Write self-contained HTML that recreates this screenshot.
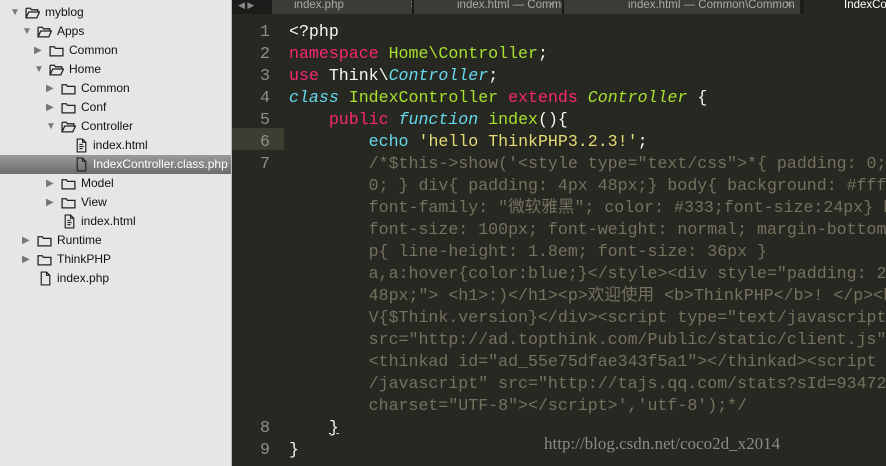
<!DOCTYPE html>
<html><head><meta charset="utf-8"><style>
*{margin:0;padding:0;box-sizing:border-box}
body{width:886px;height:466px;overflow:hidden;background:#272822;position:relative;font-family:"Liberation Sans",sans-serif}
#side{position:absolute;left:0;top:0;width:232px;height:466px;background:#e6e6e6;border-right:1px solid #bbb;overflow:hidden}
.r{position:absolute;height:19px;line-height:19px;font-size:12px;color:#111;white-space:nowrap}
.ar{position:absolute;top:0;font-size:10px;color:#777}
.r svg{position:absolute;top:3px}
.r .t{position:absolute;top:0;left:35px}
.sel{position:absolute;left:0;top:155px;width:232px;height:19px;background:linear-gradient(#9a9a9a,#6d6d6d)}
#tabs{position:absolute;left:232px;top:0;width:654px;height:14px;background:#1c1c1a;overflow:hidden}
.tab{position:absolute;top:0;height:14px;background:#3b3b37;color:#aaa;font-size:11.5px;line-height:11px;white-space:nowrap;overflow:hidden}
.tab i{position:absolute;font-style:normal;color:#999;top:0}
#cw{position:absolute;left:232px;top:14px;width:654px;height:452px;overflow:hidden}
#code{position:absolute;left:0;top:7px;font-family:"Liberation Mono","Noto Sans CJK SC",monospace;font-size:16.6px;line-height:22px;color:#f8f8f2}
.ln{position:absolute;left:0;width:38px;text-align:right;color:#8f908a}
.l{position:absolute;left:57px;white-space:pre}
.k{color:#f92672}.g{color:#a6e22e}.b{color:#66d9ef;font-style:italic}.y{color:#e6db74}.c{color:#75715e}.e{color:#66d9ef}
.gi{font-style:italic;color:#a6e22e}
.hl{position:absolute;left:232px;top:128px;width:52px;height:22px;background:#3e3d32}
</style></head><body>
<svg width="0" height="0" style="position:absolute"><defs>
<symbol id="fc" viewBox="0 0 14 12"><path d="M1 2.5h4l1 1.5h7v7H1z" fill="none" stroke="#222" stroke-width="1.2"/></symbol>
<symbol id="fo" viewBox="0 0 14 12"><path d="M1 2h4l1 1.5h6v2M1 2v9h10l2.5-5.5H3.5L1 11" fill="none" stroke="#222" stroke-width="1.2"/></symbol>
<symbol id="fi" viewBox="0 0 12 14"><path d="M2 1h5l3 3v9H2z M7 1v3h3" fill="none" stroke="#222" stroke-width="1.1"/></symbol>
<symbol id="fh" viewBox="0 0 12 14"><path d="M2 1h5l3 3v9H2z M7 1v3h3 M4 6h3M4 8h4M4 10h3" fill="none" stroke="#222" stroke-width="1.1"/></symbol>
</defs></svg>
<div id="side">
<div class="sel"></div>
<div class="r" style="top:3px;left:10px"><span class="ar">▼</span><svg width="15" height="13" style="left:15px"><use href="#fo"/></svg><span class="t">myblog</span></div>
<div class="r" style="top:22px;left:22px"><span class="ar">▼</span><svg width="15" height="13" style="left:15px"><use href="#fo"/></svg><span class="t">Apps</span></div>
<div class="r" style="top:41px;left:34px"><span class="ar">▶</span><svg width="15" height="13" style="left:15px"><use href="#fc"/></svg><span class="t">Common</span></div>
<div class="r" style="top:60px;left:34px"><span class="ar">▼</span><svg width="15" height="13" style="left:15px"><use href="#fo"/></svg><span class="t">Home</span></div>
<div class="r" style="top:79px;left:46px"><span class="ar">▶</span><svg width="15" height="13" style="left:15px"><use href="#fc"/></svg><span class="t">Common</span></div>
<div class="r" style="top:98px;left:46px"><span class="ar">▶</span><svg width="15" height="13" style="left:15px"><use href="#fc"/></svg><span class="t">Conf</span></div>
<div class="r" style="top:117px;left:46px"><span class="ar">▼</span><svg width="15" height="13" style="left:15px"><use href="#fo"/></svg><span class="t">Controller</span></div>
<div class="r" style="top:136px;left:58px"><svg width="13" height="15" style="left:17px;top:2px"><use href="#fh"/></svg><span class="t">index.html</span></div>
<div class="r" style="top:155px;left:58px;color:#fff"><svg width="13" height="15" style="left:17px;top:2px"><use href="#fi"/></svg><span class="t">IndexController.class.php</span></div>
<div class="r" style="top:174px;left:46px"><span class="ar">▶</span><svg width="15" height="13" style="left:15px"><use href="#fc"/></svg><span class="t">Model</span></div>
<div class="r" style="top:193px;left:46px"><span class="ar">▶</span><svg width="15" height="13" style="left:15px"><use href="#fc"/></svg><span class="t">View</span></div>
<div class="r" style="top:212px;left:46px"><svg width="13" height="15" style="left:17px;top:2px"><use href="#fh"/></svg><span class="t">index.html</span></div>
<div class="r" style="top:231px;left:22px"><span class="ar">▶</span><svg width="15" height="13" style="left:15px"><use href="#fc"/></svg><span class="t">Runtime</span></div>
<div class="r" style="top:250px;left:22px"><span class="ar">▶</span><svg width="15" height="13" style="left:15px"><use href="#fc"/></svg><span class="t">ThinkPHP</span></div>
<div class="r" style="top:269px;left:22px"><svg width="13" height="15" style="left:17px;top:2px"><use href="#fi"/></svg><span class="t">index.php</span></div>
</div>
<div id="tabs">
<div style="position:absolute;left:6px;top:0;color:#888;font-size:9px">◀ ▶</div>
<div class="tab" style="left:40px;width:140px;padding-left:22px">index.php<i style="left:140px;left:138px">×</i></div>
<div class="tab" style="left:182px;width:148px;padding-left:43px">index.html — Common<i style="left:134px">×</i></div>
<div class="tab" style="left:332px;width:236px;padding-left:64px">index.html — Common\Common<i style="left:222px">×</i></div>
<div class="tab" style="left:572px;width:90px;background:#272822;color:#fff;padding-left:40px">IndexController</div>
</div>
<div class="hl"></div>
<div id="cw"><div id="code">
<div class="ln" style="top:0">1</div><div class="l" style="top:0">&lt;?php</div>
<div class="ln" style="top:22px">2</div><div class="l" style="top:22px"><span class="k">namespace</span> <span class="g">Home\Controller</span>;</div>
<div class="ln" style="top:44px">3</div><div class="l" style="top:44px"><span class="k">use</span> Think\<span class="b">Controller</span>;</div>
<div class="ln" style="top:66px">4</div><div class="l" style="top:66px"><span class="b">class</span> <span class="g">IndexController</span> <span class="k">extends</span> <span class="gi">Controller</span> {</div>
<div class="ln" style="top:88px">5</div><div class="l" style="top:88px">    <span class="k">public</span> <span class="b">function</span> <span class="g">index</span>(){</div>
<div class="ln" style="top:110px">6</div><div class="l" style="top:110px">        <span class="e">echo</span> <span class="y">'hello ThinkPHP3.2.3!'</span>;</div>
<div class="ln" style="top:132px">7</div>
<div class="l c" style="top:132px">        /*$this-&gt;show('&lt;style type="text/css"&gt;*{ padding: 0; margin:
        0; } div{ padding: 4px 48px;} body{ background: #fff;
        font-family: "微软雅黑"; color: #333;font-size:24px} h1{
        font-size: 100px; font-weight: normal; margin-bottom: 12px; }
        p{ line-height: 1.8em; font-size: 36px }
        a,a:hover{color:blue;}&lt;/style&gt;&lt;div style="padding: 24px
        48px;"&gt; &lt;h1&gt;:)&lt;/h1&gt;&lt;p&gt;欢迎使用 &lt;b&gt;ThinkPHP&lt;/b&gt;! &lt;/p&gt;&lt;br/&gt;
        V{$Think.version}&lt;/div&gt;&lt;script type="text/javascript"
        src="http://ad.topthink.com/Public/static/client.js"&gt;&lt;/script&gt;
        &lt;thinkad id="ad_55e75dfae343f5a1"&gt;&lt;/thinkad&gt;&lt;script type="text
        /javascript" src="http://tajs.qq.com/stats?sId=9347272"
        charset="UTF-8"&gt;&lt;/script&gt;','utf-8');*/</div>
<div class="ln" style="top:396px">8</div><div class="l" style="top:396px">    <u>}</u></div>
<div class="ln" style="top:418px">9</div><div class="l" style="top:418px">}</div>
</div></div>
<div style="position:absolute;left:544px;top:434px;font-family:'Liberation Serif',serif;font-size:17px;color:#8a8a86">http://blog.csdn.net/coco2d_x2014</div>
</body></html>
